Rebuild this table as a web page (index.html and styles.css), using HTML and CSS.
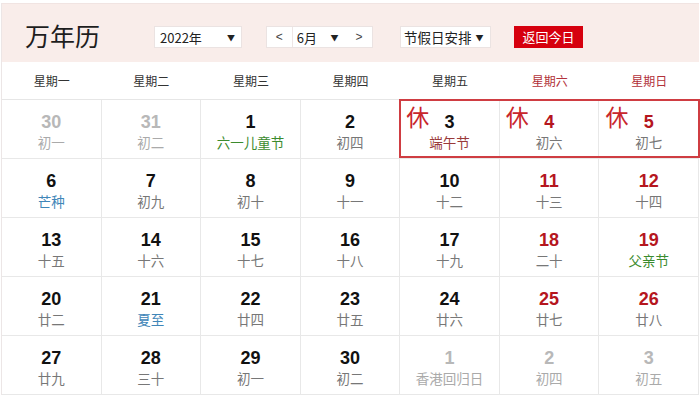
FILE: index.html
```html
<!DOCTYPE html>
<html lang="zh-CN">
<head>
<meta charset="utf-8">
<title>万年历</title>
<link rel="stylesheet" href="styles.css">
</head>
<body>
<div class="app">
  <div class="top">
    <div class="title">万年历</div>
    <div class="box year"><span>2022年</span><span class="arrow">▼</span></div>
    <div class="box month">
      <span class="nav prev">&lt;</span>
      <span class="mval">6月</span><span class="arrow">▼</span>
      <span class="nav next">&gt;</span>
    </div>
    <div class="box holiday"><span>节假日安排</span><span class="arrow">▼</span></div>
    <div class="today">返回今日</div>
  </div>
  <div class="week">
    <div>星期一</div><div>星期二</div><div>星期三</div><div>星期四</div><div>星期五</div><div class="we">星期六</div><div class="we">星期日</div>
  </div>
  <div class="grid">
    <div class="cell other"><b>30</b><span>初一</span></div>
    <div class="cell other"><b>31</b><span>初二</span></div>
    <div class="cell"><b>1</b><span class="fest">六一儿童节</span></div>
    <div class="cell"><b>2</b><span>初四</span></div>
    <div class="cell rest c5"><i class="xiu">休</i><b>3</b><span class="dw">端午节</span></div>
    <div class="cell rest c6 wk"><i class="xiu">休</i><b>4</b><span>初六</span></div>
    <div class="cell rest c7 wk"><i class="xiu">休</i><b>5</b><span>初七</span></div>
    <div class="hl"></div>

    <div class="cell"><b>6</b><span class="term">芒种</span></div>
    <div class="cell"><b>7</b><span>初九</span></div>
    <div class="cell"><b>8</b><span>初十</span></div>
    <div class="cell"><b>9</b><span>十一</span></div>
    <div class="cell"><b>10</b><span>十二</span></div>
    <div class="cell wk"><b>11</b><span>十三</span></div>
    <div class="cell wk"><b>12</b><span>十四</span></div>

    <div class="cell"><b>13</b><span>十五</span></div>
    <div class="cell"><b>14</b><span>十六</span></div>
    <div class="cell"><b>15</b><span>十七</span></div>
    <div class="cell"><b>16</b><span>十八</span></div>
    <div class="cell"><b>17</b><span>十九</span></div>
    <div class="cell wk"><b>18</b><span>二十</span></div>
    <div class="cell wk"><b>19</b><span class="fest">父亲节</span></div>

    <div class="cell"><b>20</b><span>廿二</span></div>
    <div class="cell"><b>21</b><span class="term">夏至</span></div>
    <div class="cell"><b>22</b><span>廿四</span></div>
    <div class="cell"><b>23</b><span>廿五</span></div>
    <div class="cell"><b>24</b><span>廿六</span></div>
    <div class="cell wk"><b>25</b><span>廿七</span></div>
    <div class="cell wk"><b>26</b><span>廿八</span></div>

    <div class="cell"><b>27</b><span>廿九</span></div>
    <div class="cell"><b>28</b><span>三十</span></div>
    <div class="cell"><b>29</b><span>初一</span></div>
    <div class="cell"><b>30</b><span>初二</span></div>
    <div class="cell other"><b>1</b><span>香港回归日</span></div>
    <div class="cell other"><b>2</b><span>初四</span></div>
    <div class="cell other"><b>3</b><span>初五</span></div>
  </div>
</div>
</body>
</html>
```
FILE: styles.css
```css
* { box-sizing: border-box; }
html, body { margin: 0; padding: 0; background: #fff; }
body {
  font-family: "Noto Sans CJK SC", "Liberation Sans", sans-serif;
  color: #222;
}
.app {
  width: 698px;
  margin: 3px 0 0 1px;
  border-left: 1px solid #ece6e6;
}
.top {
  height: 59px;
  background: #f9edea;
  border-top: 1px solid #f1e4e2;
  display: flex;
  align-items: flex-start;
  padding: 22px 0 0 23px;
}
.title {
  width: 129px;
  font-size: 25px;
  line-height: 22px;
  margin-top: -2px;
  color: #1e1e1e;
}
.box {
  height: 22px;
  background: #fff;
  border: 1px solid #ebe3e2;
  display: flex;
  align-items: center;
  font-size: 13px;
  color: #222;
}
.arrow { font-size: 8px; color: #222; }
.year {
  width: 88px;
  padding: 0 6px 0 5px;
  justify-content: space-between;
}
.month {
  width: 107px;
  margin-left: 24px;
  padding: 0;
}
.month .nav {
  width: 26px;
  text-align: center;
  font-size: 12px;
  font-family: "Liberation Sans", sans-serif;
  color: #444;
  height: 100%;
  line-height: 20px;
}
.month .prev { border-right: 1px solid #eee6e5; }
.month .mval { margin-left: 4px; width: 34px; }
.month .arrow { width: 16px; }
.month .next { margin-left: auto; }
.holiday {
  width: 91px;
  margin-left: 27px;
  padding: 0 0 0 3px;
  font-size: 13.5px;
}
.holiday .arrow { margin-left: 4px; }
.today {
  width: 69px;
  height: 22px;
  margin-left: 23px;
  background: #d6000e;
  color: #fff;
  font-size: 13px;
  line-height: 22px;
  text-align: center;
}
.week {
  display: grid;
  grid-template-columns: repeat(7, 1fr);
  height: 38px;
  align-items: center;
  font-size: 12px;
  color: #333;
  text-align: center;
  border-bottom: 1px solid #e6e6e6;
}
.week .we { color: #b2323a; }
.grid {
  display: grid;
  grid-template-columns: repeat(7, 1fr);
  grid-auto-rows: 59px;
}
.cell {
  position: relative;
  border-right: 1px solid #e8e8e8;
  border-bottom: 1px solid #e8e8e8;
  display: flex;
  flex-direction: column;
  align-items: center;
  padding-top: 12px;
}
.rest { grid-row: 1; }
.c5 { grid-column: 5; }
.c6 { grid-column: 6; }
.c7 { grid-column: 7; }
.cell b {
  font-family: "Liberation Sans", sans-serif;
  font-weight: bold;
  font-size: 18px;
  line-height: 20px;
  color: #111;
}
.cell span {
  font-size: 13.5px;
  line-height: 19px;
  margin-top: 1px;
  color: #777;
}
.cell.wk b { color: #b5161e; }
.cell.other b { color: #b8b8b8; }
.cell.other span { color: #aaa; }
.cell .fest { color: #3b8b2e; }
.cell .term { color: #3f86b8; }
.cell .dw { color: #9a3a3a; }
.xiu {
  position: absolute;
  left: 6px;
  top: 3px;
  font-style: normal;
  font-size: 23px;
  line-height: 26px;
  color: #c8262c;
}
.hl {
  grid-column: 5 / 8;
  grid-row: 1;
  margin: -1px -1px 1px -1px;
  border: 2px solid #cf3d42;
  pointer-events: none;
  z-index: 1;
}
```
